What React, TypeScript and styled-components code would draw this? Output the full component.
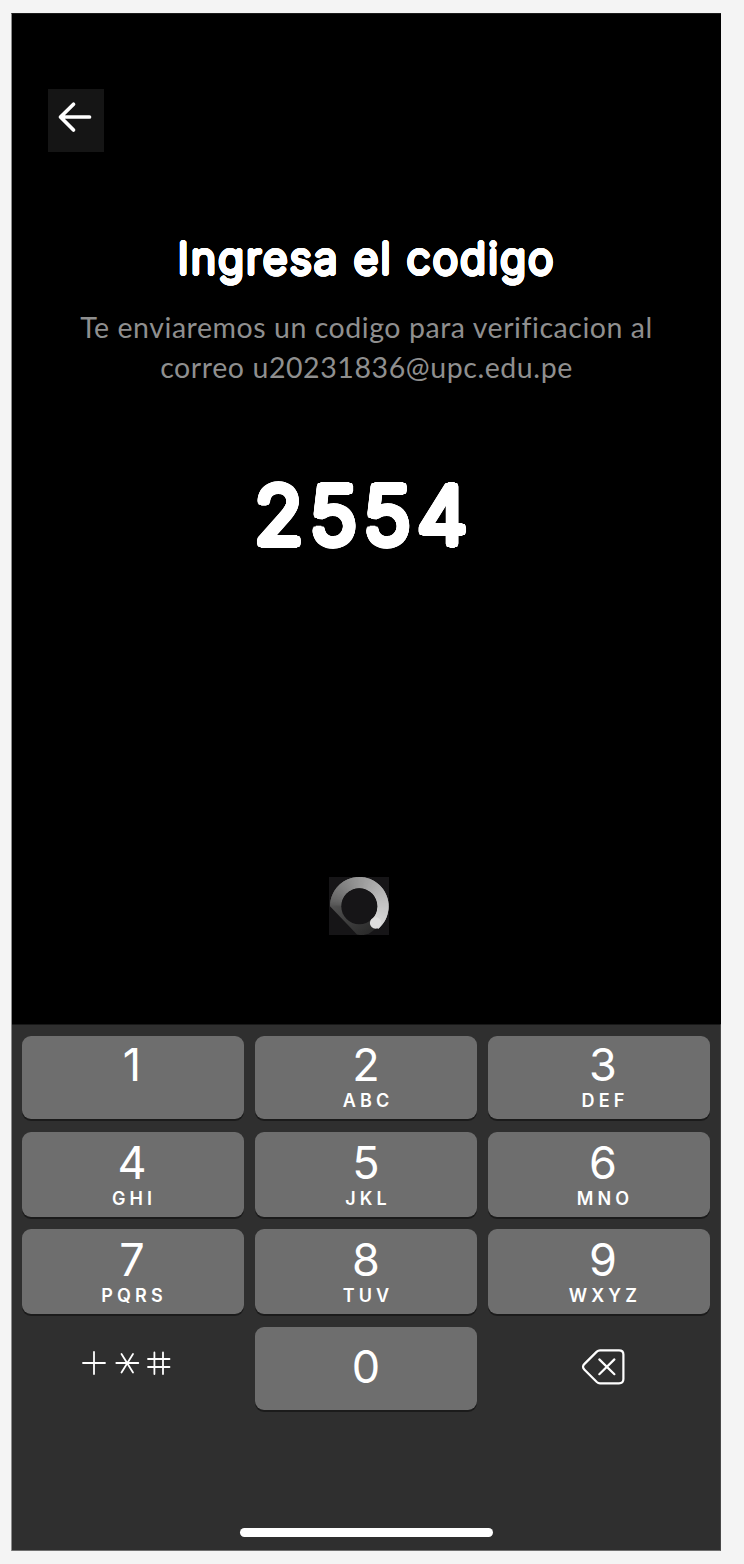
import React from "react";
import styled, { createGlobalStyle } from "styled-components";

const GlobalStyle = createGlobalStyle`
  * { box-sizing: border-box; }
  body { margin: 0; background: #f4f4f4; }
`;

const Page = styled.div`
  height: 1564px;
  padding: 13px 23px 13px 11px;
  background: #f4f4f4;
`;

const Phone = styled.main`
  height: 1538px;
  display: flex;
  flex-direction: column;
  background: #000;
  border-left: 1px solid #8c8c8c;
  border-top: 1px solid #1c1c1c;
  color: #fff;
  font-family: Lato, "Noto Sans", sans-serif;
`;

const Screen = styled.section`
  height: 1010px;
  display: flex;
  flex-direction: column;
  align-items: center;
`;

const BackButton = styled.button`
  align-self: flex-start;
  margin: 75px 0 0 36px;
  padding: 0;
  width: 56px;
  height: 63px;
  border: 0;
  background: #151515;
  svg { display: block; }
`;

/* Thickens glyphs evenly in every direction, which rounds off their corners. */
const rounded = (radius: number) =>
  Array.from({ length: 24 }, (_, i) => {
    const a = (i * Math.PI) / 12;
    return `${(radius * Math.cos(a)).toFixed(2)}px ${(radius * Math.sin(a)).toFixed(2)}px 0 #fff`;
  }).join(", ");

const Title = styled.h1`
  margin: 74px 0 0;
  font-family: Inter, sans-serif;
  font-size: 43px;
  line-height: 64px;
  font-weight: 300;
  letter-spacing: 2px;
  white-space: nowrap;
  text-shadow: ${rounded(1.6)};
`;

const Message = styled.p`
  margin: 17px 0 1px;
  display: flex;
  flex-direction: column;
  align-items: center;
  color: #8f8f8f;
  font-size: 28.5px;
  line-height: 40px;
`;

const Line = styled.span<{ $spacing: number }>`
  letter-spacing: ${(p) => p.$spacing}px;
  white-space: nowrap;
`;

const Code = styled.div`
  margin: 67px 5px 0 0;
  font-family: Inter, sans-serif;
  font-size: 80px;
  line-height: 120px;
  font-weight: 300;
  letter-spacing: 6.3px;
  text-shadow: ${rounded(3.6)}, ${rounded(1.8)};
`;

const Loader = styled.div`
  margin: 302px 15px 0 0;
  width: 60px;
  height: 58px;
  background: #161517;
  svg { display: block; }
`;

const Keyboard = styled.section`
  flex: 1;
  display: flex;
  flex-direction: column;
  align-items: center;
  background: #2f2f2f;
  border-top: 1px solid #181818;
  border-bottom: 1px solid #707070;
  border-right: 1px solid #484848;
`;

const Keys = styled.div`
  align-self: flex-start;
  margin: 11px 0 0 10px;
  display: grid;
  grid-template-columns: repeat(3, 222px);
  grid-template-rows: 83px 85px 85px 83px;
  column-gap: 11px;
  row-gap: 12.67px;
`;

const Key = styled.button<{ $top: number; $left?: number; $right?: number }>`
  display: flex;
  flex-direction: column;
  align-items: center;
  padding: ${(p) => p.$top}px ${(p) => p.$right ?? 0}px 0 ${(p) => p.$left ?? 0}px;
  border: 0;
  border-radius: 9px;
  background: #6e6e6e;
  box-shadow: 0 2px 0 #1b1b1b;
  color: #fff;
  font-family: Inter, sans-serif;
`;

const Digit = styled.span`
  font-size: 45px;
  line-height: 44px;
  font-weight: 400;
`;

const Letters = styled.span`
  margin-top: 4px;
  padding-left: 4px;
  font-size: 18px;
  line-height: 20px;
  font-weight: 600;
  letter-spacing: 4.1px;
`;

const PlainKey = styled.button`
  padding: 0;
  border: 0;
  background: transparent;
  svg { display: block; }
`;

const HomeBar = styled.div`
  margin-top: 118px;
  width: 253px;
  height: 9px;
  border-radius: 5px;
  background: #fff;
`;

const KEYS = [
  ["1", ""], ["2", "ABC"], ["3", "DEF"],
  ["4", "GHI"], ["5", "JKL"], ["6", "MNO"],
  ["7", "PQRS"], ["8", "TUV"], ["9", "WXYZ"],
];

const STEPS = 72;
const SWEEP = 230;

function ringSegment(i: number) {
  const start = 180 + (i * SWEEP) / STEPS;
  const end = start + (SWEEP / STEPS) * (i < STEPS - 1 ? 2 : 1);
  const at = (deg: number, r: number) => {
    const a = (deg * Math.PI) / 180;
    return `${(30.3 + r * Math.cos(a)).toFixed(2)} ${(29.3 + r * Math.sin(a)).toFixed(2)}`;
  };
  return `M${at(start, 29.3)}A29.3 29.3 0 0 1 ${at(end, 29.3)}L${at(end, 18)}A18 18 0 0 0 ${at(start, 18)}Z`;
}

function Spinner() {
  return (
    <svg width="60" height="58" viewBox="0 0 60 58">
      <defs>
        <linearGradient id="tail" x1="0" y1="0" x2="1" y2="1">
          <stop offset="0" stopColor="#545454" />
          <stop offset="1" stopColor="#262626" />
        </linearGradient>
      </defs>
      <path d="M1 29.3L28 57.5Q38 60 46 52L40 40L14 25Z" fill="url(#tail)" />
      {Array.from({ length: STEPS }, (_, i) => {
        const t = i / STEPS;
        const v = Math.round(84 + 136 * Math.pow(t, 0.72));
        return <path key={i} d={ringSegment(i)} fill={`rgb(${v},${v},${v})`} />;
      })}
      <circle cx="30.3" cy="29.3" r="18" fill="#161517" />
      <circle cx="46.6" cy="46" r="5.7" fill="#dedede" />
    </svg>
  );
}

export default function App() {
  return (
    <>
      <GlobalStyle />
      <Page>
        <Phone>
          <Screen>
            <BackButton aria-label="Volver">
              <svg width="56" height="63" fill="none" stroke="#fff" strokeWidth="3.7" strokeLinecap="round" strokeLinejoin="round">
                <path d="M41.5 28H12.5M25.5 15.2L12.5 28L25.5 41" />
              </svg>
            </BackButton>
            <Title>Ingresa el codigo</Title>
            <Message>
              <Line $spacing={0.55}>Te enviaremos un codigo para verificacion al</Line>
              <Line $spacing={0.58}>correo u20231836@upc.edu.pe</Line>
            </Message>
            <Code>2554</Code>
            <Loader><Spinner /></Loader>
          </Screen>
          <Keyboard>
            <Keys>
              {KEYS.map(([digit, letters], i) => (
                <Key
                  key={digit}
                  $top={i < 3 ? 6.5 : 9}
                  $left={i % 3 === 2 ? 8 : 0}
                  $right={i % 3 === 0 ? 2 : 0}
                >
                  <Digit>{digit}</Digit>
                  {letters && <Letters>{letters}</Letters>}
                </Key>
              ))}
              <PlainKey aria-label="Símbolos">
                <svg width="222" height="83" fill="none" stroke="#fff" strokeWidth="1.8" strokeLinecap="round">
                  <path d="M61 36H83M72 25V47" />
                  <path d="M94.3 36H116.3M99.5 27L111 45.5M111 27L99.5 45.5" />
                  <path d="M132.4 25.5V47M141 25.5V47M126 32H147.5M126 40H147.5" />
                </svg>
              </PlainKey>
              <Key $top={18}><Digit>0</Digit></Key>
              <PlainKey aria-label="Borrar">
                <svg width="222" height="83" fill="none" stroke="#fff" strokeWidth="2.2" strokeLinecap="round" strokeLinejoin="round">
                  <path d="M112 23.3H131Q135.4 23.3 135.4 27.5V52Q135.4 56.3 131 56.3H112Q110.2 56.3 108.8 55L96.5 42.7Q93.5 39.8 96.5 36.9L108.8 24.6Q110.2 23.3 112 23.3Z" />
                  <path d="M111.3 32.4L126.4 47.2M126.4 32.4L111.3 47.2" />
                </svg>
              </PlainKey>
            </Keys>
            <HomeBar />
          </Keyboard>
        </Phone>
      </Page>
    </>
  );
}
